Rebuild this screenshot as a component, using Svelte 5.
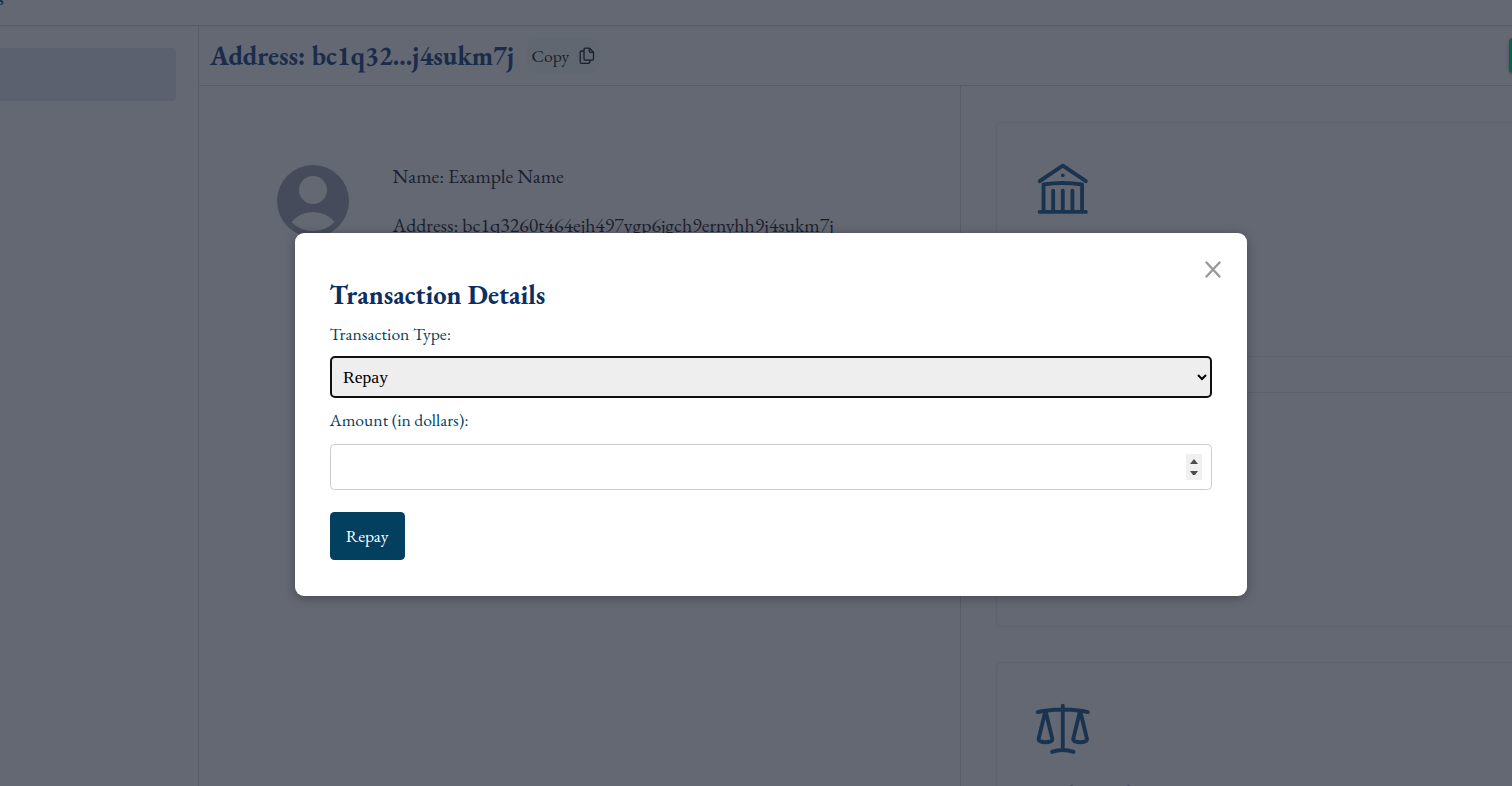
<script>
  let kind = $state('Repay');
  let amount = $state('');
</script>

<div class="page">
  <header class="topbar"><span>s</span></header>
  <div class="body">
    <aside><div class="nav-item"></div></aside>
    <main>
      <div class="heading">
        <h2>Address: bc1q32...j4sukm7j</h2>
        <button class="copy">
          <span>Copy</span>
          <svg width="16" height="18" viewBox="0 0 16 18" fill="none" stroke="currentColor" stroke-width="1.3" stroke-linejoin="round">
            <path d="M6.3 1.2h4.200l4 4v6.600a1.300 1.300 0 0 1-1.300 1.300H6.300A1.300 1.300 0 0 1 5 11.800V2.500a1.300 1.300 0 0 1 1.300-1.300zM10.300 1.400v2.700a1.300 1.300 0 0 0 1.300 1.300h2.700" />
            <path d="M5 4H2.500a1.300 1.300 0 0 0-1.300 1.300v9.800a1.300 1.300 0 0 0 1.300 1.300h7a1.300 1.300 0 0 0 1.300-1.300v-2" />
          </svg>
        </button>
        <div class="action"></div>
      </div>
      <div class="columns">
        <section class="profile">
          <svg class="avatar" width="72" height="72" viewBox="0 0 72 72">
            <circle cx="36" cy="36" r="36" fill="#464b5c" />
            <circle cx="36" cy="25" r="14" fill="#646873" />
            <path d="M14.500 57Q23 47 36 47T57.500 57Q49 66 36 66T14.500 57z" fill="#646873" />
          </svg>
          <div class="info">
            <p>Name: Example Name</p>
            <p>Address: bc1q3260t464ejh497ygp6jgch9ernyhh9j4sukm7j</p>
          </div>
        </section>
        <section class="cards">
          <div class="card">
            <svg class="icon" viewBox="0 0 24 24">
              <path d="M12 21v-8.250M15.750 21v-8.250M8.250 21v-8.250M3 9l9-6 9 6m-1.500 12V10.332A48.360 48.360 0 0 0 12 9.750c-2.551 0-5.056.2-7.500.582V21M3 21h18M12 6.750h.008v.008H12V6.750Z" />
            </svg>
          </div>
          <div class="card"></div>
          <div class="card">
            <svg class="icon" viewBox="0 0 24 24">
              <path d="M12 3v17.250m0 0c-1.472 0-2.882.265-4.185.75M12 20.250c1.472 0 2.882.265 4.185.75M18.750 4.970A48.416 48.416 0 0 0 12 4.500c-2.291 0-4.545.16-6.750.47m13.500 0c1.010.143 2.010.317 3 .52m-3-.52 2.620 10.726c.122.499-.106 1.028-.589 1.202a5.988 5.988 0 0 1-2.031.352 5.988 5.988 0 0 1-2.031-.352c-.483-.174-.711-.703-.59-1.202L18.750 4.971Zm-16.500.52c.99-.203 1.990-.377 3-.52m0 0 2.620 10.726c.122.499-.106 1.028-.589 1.202a5.989 5.989 0 0 1-2.031.352 5.989 5.989 0 0 1-2.031-.352c-.483-.174-.711-.703-.59-1.202L5.250 4.971Z" />
            </svg>
            <svg class="ticks" width="120" height="3" viewBox="0 0 120 3" fill="#343e50">
              <path d="M37.500 3v-1l3-1v2zM94.500 3v-1l3-1v2z" />
            </svg>
          </div>
        </section>
      </div>
    </main>
  </div>
</div>

<div class="modal" role="dialog">
  <button class="close" aria-label="Close">
    <svg width="16" height="17" viewBox="0 0 16 17" stroke="#999" stroke-width="2.400" stroke-linecap="round"><path d="M1.500 1.500l13 14M14.500 1.500l-13 14" /></svg>
  </button>
  <h2>Transaction Details</h2>
  <label class="type" for="kind">Transaction Type:</label>
  <select id="kind" bind:value={kind}><option>Repay</option></select>
  <label class="amount" for="amount">Amount (in dollars):</label>
  <div class="field">
    <input id="amount" type="number" bind:value={amount} />
    <svg class="spin" width="16" height="26" viewBox="0 0 16 26">
      <rect width="16" height="26" fill="#f0f0f0" />
      <path d="M4 10l4-5 4 5zM4 17h8l-3 4H7z" fill="#4d4d4d" />
    </svg>
  </div>
  <button class="submit">Repay</button>
</div>

<style>
  :global(body) { margin: 0; overflow: hidden; }
  .page, .modal, button { font-family: 'EB Garamond', 'Liberation Serif', serif; box-sizing: border-box; }
  .page {
    width: 1512px; height: 786px; overflow: hidden;
    display: flex; flex-direction: column;
    background: #646873; color: #1b1f2d;
  }
  .topbar { box-sizing: border-box; height: 26px; flex: none; border-bottom: 1px solid #575c69; overflow: hidden; }
  .topbar span { display: block; margin: -11px 0 0 -2.500px; font-size: 18px; font-weight: 600; line-height: 20px; color: #1a3049; }
  .body { flex: 1; display: flex; min-height: 0; }
  aside { box-sizing: border-box; width: 199px; flex: none; border-right: 1px solid #575c69; padding-top: 22px; }
  .nav-item { width: 176px; height: 53px; background: #5b616e; border-radius: 0 4px 4px 0; }
  main { flex: 1; min-width: 0; display: flex; flex-direction: column; }
  .heading { box-sizing: border-box; height: 60px; flex: none; display: flex; align-items: center; border-bottom: 1px solid #575c69; padding-left: 11px; }
  h2 { margin: 0; font-size: 26.400px; line-height: 36px; font-weight: 700; white-space: nowrap; }
  .heading h2 { color: #1b2c4b; width: 317px; }
  .copy {
    display: flex; align-items: center; gap: 9.500px; width: 73px; height: 35px; padding: 0 4.500px;
    border: 0; border-radius: 9px; background: #616771; color: #1b1f2d; font-size: 17.600px;
  }
  .copy svg { flex: none; }
  .action { width: 60px; height: 35px; flex: none; margin: 0 -57px 0 auto; border-radius: 4px; background: #0c6149; box-shadow: 0 1px 3px rgba(0,0,0,.3); }
  .columns { flex: 1; display: flex; min-height: 0; }
  .profile { box-sizing: border-box; width: 762px; flex: none; display: flex; align-items: flex-start; border-right: 1px solid #575c69; padding: 79px 0 0 78px; }
  .avatar { flex: none; }
  .info { margin-left: 43.600px; }
  .info p { margin: -3px 0 24px; font-size: 19.800px; line-height: 28px; white-space: nowrap; }
  .cards { flex: none; width: 600px; padding: 36px 0 0 35px; }
  .card { box-sizing: border-box; height: 235px; margin-bottom: 35px; border: 1px solid #5c626e; border-radius: 5px; padding: 35px; }
  .icon { display: block; width: 61.600px; height: 61.600px; fill: none; stroke: #1a344f; stroke-width: 1.500; stroke-linecap: round; stroke-linejoin: round; }
  .ticks { display: block; margin-top: 24px; }

  .modal {
    position: absolute; left: 294.500px; top: 232.800px; width: 952.200px; height: 363.200px;
    padding: 44px 35.200px 35px 35px; background: #fff; border-radius: 9px;
    box-shadow: 0 2px 11px rgba(0,0,0,.3);
    display: flex; flex-direction: column; align-items: flex-start;
  }
  .close { position: absolute; right: 26px; top: 28.500px; padding: 0; border: 0; background: none; line-height: 0; }
  .modal h2 { color: #0b2f62; }
  label { font-size: 17.600px; line-height: 22px; color: #03405f; }
  .type { margin-top: 10px; }
  .amount { margin-top: 11px; }
  select, input { box-sizing: border-box; width: 100%; font-family: 'Liberation Serif', serif; font-size: 17.600px; }
  select { height: 42px; margin-top: 11px; padding: 0 0 0 7.500px; border: 2px solid #101010; border-radius: 5px; background-color: #eee; color: #000; outline: none; }
  .field { position: relative; width: 100%; height: 46px; margin-top: 13px; }
  input { display: block; height: 46px; padding: 9px; border: 1px solid #ccc; border-radius: 4.400px; background: #fff; appearance: textfield; }
  input::-webkit-inner-spin-button { appearance: none; }
  .spin { position: absolute; right: 10px; top: 10px; }
  .submit { width: 75px; height: 48px; margin-top: 22px; padding: 0; border: 0; border-radius: 4.400px; background: #033f5e; color: #fff; font-size: 17.600px; }
</style>
